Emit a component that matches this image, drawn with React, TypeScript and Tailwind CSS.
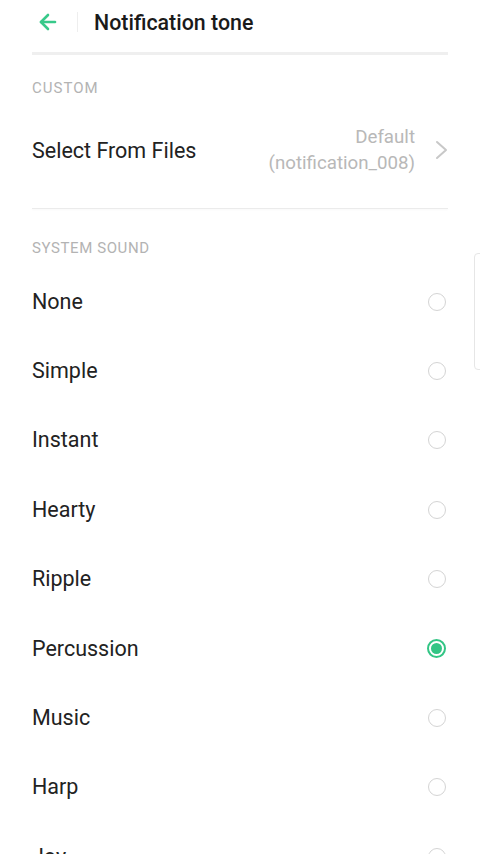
import { ArrowLeft } from "lucide-react";

const sounds = ["None", "Simple", "Instant", "Hearty", "Ripple", "Percussion", "Music", "Harp", "Joy"];
const selected = "Percussion";

const Radio = ({ on }: { on: boolean }) =>
  on ? (
    <div className="w-[19px] h-[19px] rounded-full border-2 border-[#33c585] flex items-center justify-center">
      <div className="w-[11px] h-[11px] rounded-full bg-[#33c585]" />
    </div>
  ) : (
    <div className="w-[18px] h-[18px] rounded-full border-[1.5px] border-[#d4d4d4]" />
  );

export default function App() {
  return (
    <div className="relative w-[480px] h-[854px] overflow-hidden bg-white font-['Roboto',sans-serif]">
      <div className="h-[44px] flex items-center">
        <div className="w-[77px] flex justify-center pl-[18px]">
          <ArrowLeft size={24} strokeWidth={2.6} color="#38c98a" />
        </div>
        <div className="w-px h-[20px] bg-[#eeeeee]" />
        <span className="ml-[16px] pt-[3px] text-[21.4px] font-medium text-[#1a1a1a]">Notification tone</span>
      </div>
      <div className="mt-2 mx-8 h-[3px] bg-[#efefef]" />

      <div className="h-[66px] px-8 flex items-center">
        <span className="text-[15px] text-[#b3b3b3] tracking-[1px]">CUSTOM</span>
      </div>
      <div className="h-[58px] pl-8 pr-[32px] flex items-center">
        <span className="flex-1 text-[21.5px] text-[#222222] pt-[2px]">Select From Files</span>
        <div className="text-right text-[18.7px] leading-[26px] text-[#b8b8b8]">
          <div>Default</div>
          <div>(notification_008)</div>
        </div>
        <svg width="13" height="20" viewBox="0 0 13 20" className="ml-[20px]" fill="none">
          <polyline points="2,2 11,10 2,18" stroke="#c8c8c8" strokeWidth="2" strokeLinecap="round" strokeLinejoin="round" />
        </svg>
      </div>
      <div className="mt-[29px] mx-8 h-px bg-[#ebebeb] shadow-[0_1px_2px_rgba(0,0,0,0.04)]" />

      <div className="h-[58px] px-8 pt-[29px]">
        <span className="block text-[15px] leading-[20px] text-[#b3b3b3] tracking-[0.6px]">SYSTEM SOUND</span>
      </div>
      {sounds.map((s) => (
        <div key={s} className="h-[69.4px] pl-8 pr-[34px] flex items-center justify-between">
          <span className="text-[21.5px] text-[#222222]">{s}</span>
          <Radio on={s === selected} />
        </div>
      ))}

      <div className="absolute right-[-4px] top-[253px] w-[10px] h-[117px] rounded-[4px] border border-[#e6e6e6]" />
    </div>
  );
}
